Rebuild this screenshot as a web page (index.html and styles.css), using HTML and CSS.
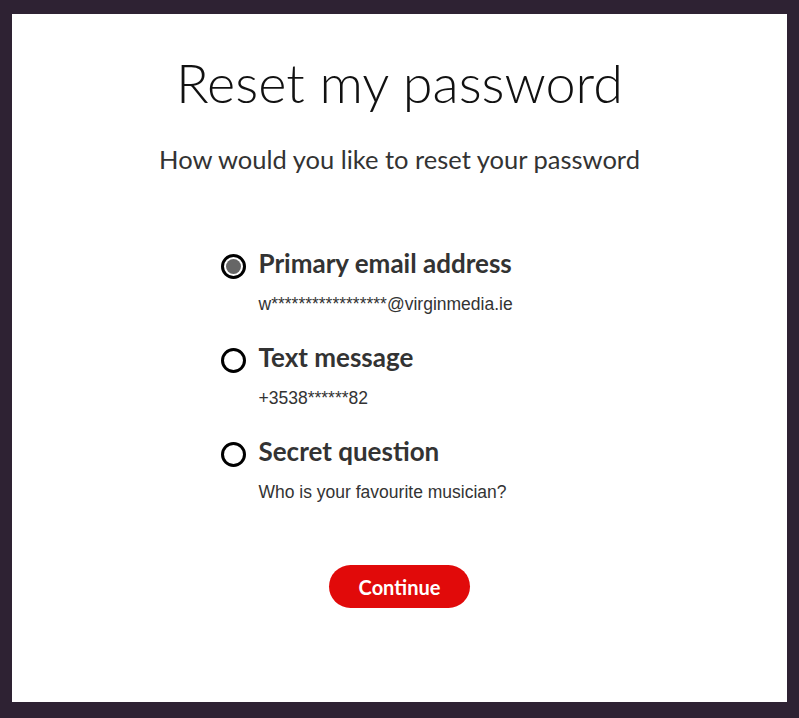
FILE: index.html
```html
<!DOCTYPE html>
<html lang="en">
<head>
    <meta charset="UTF-8">
    <meta name="viewport" content="width=device-width, initial-scale=1.0">
    <title>Reset my password</title>
    <link rel="stylesheet" href="styles.css">
</head>
<body>
    <div class="panel">
        <h1>Reset my password</h1>
        <p class="intro">How would you like to reset your password</p>

        <div class="options">
            <label class="option">
                <input type="radio" name="method" value="email" checked>
                <span class="radio"></span>
                <span class="option-text">
                    <span class="option-title">Primary email address</span>
                    <span class="option-detail">w*****************@virginmedia.ie</span>
                </span>
            </label>
            <label class="option">
                <input type="radio" name="method" value="sms">
                <span class="radio"></span>
                <span class="option-text">
                    <span class="option-title">Text message</span>
                    <span class="option-detail">+3538******82</span>
                </span>
            </label>
            <label class="option">
                <input type="radio" name="method" value="question">
                <span class="radio"></span>
                <span class="option-text">
                    <span class="option-title">Secret question</span>
                    <span class="option-detail">Who is your favourite musician?</span>
                </span>
            </label>
        </div>

        <button class="continue">Continue</button>
    </div>
</body>
</html>
```

FILE: styles.css
```css
body {
    margin: 0;
    background-color: #2e2233;
    padding: 14px 12px 16px 12px;
    font-family: 'Lato', 'Liberation Sans', sans-serif;
}
.panel {
    background-color: #fff;
    height: 688px;
    box-sizing: border-box;
    padding-top: 36px;
    text-align: center;
}
h1 {
    font-size: 54px;
    font-weight: 300;
    color: #111;
    margin: 0;
    line-height: 66px;
}
.intro {
    font-size: 25.5px;
    color: #333;
    margin: 27px 0 0 0;
    line-height: 32px;
}
.options {
    width: 360px;
    margin: 71px auto 0 auto;
    text-align: left;
    display: flex;
    flex-direction: column;
    gap: 26px;
}
.option {
    display: flex;
    gap: 13px;
    cursor: pointer;
}
.option input {
    display: none;
}
.radio {
    width: 25px;
    height: 25px;
    box-sizing: border-box;
    border: 3px solid #000;
    border-radius: 50%;
    margin: 8px 0 0 1px;
    flex-shrink: 0;
    position: relative;
}
.option input:checked + .radio::after {
    content: '';
    position: absolute;
    left: 2px;
    top: 2px;
    width: 15px;
    height: 15px;
    border-radius: 50%;
    background-color: #666;
}
.option-text {
    display: flex;
    flex-direction: column;
}
.option-title {
    font-size: 26px;
    font-weight: 700;
    color: #333;
    line-height: 34px;
}
.option-detail {
    font-family: 'Liberation Sans', Arial, sans-serif;
    font-size: 17.5px;
    color: #333;
    margin-top: 14px;
    line-height: 20px;
}
.continue {
    margin-top: 63px;
    width: 141px;
    height: 43px;
    border: none;
    border-radius: 22px;
    background-color: #e10a0a;
    color: #fff;
    font-family: 'Lato', 'Liberation Sans', sans-serif;
    font-size: 20px;
    font-weight: 700;
    cursor: pointer;
}
```
